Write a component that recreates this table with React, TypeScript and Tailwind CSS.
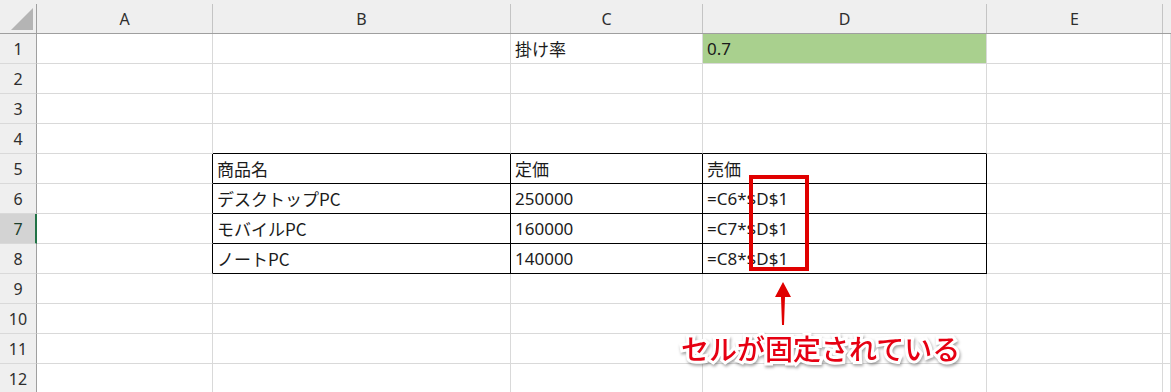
import React from "react";

type Col = { label: string; w: number | null };

const COLS: Col[] = [
  { label: "A", w: 176 },
  { label: "B", w: 298 },
  { label: "C", w: 192 },
  { label: "D", w: 284 },
  { label: "E", w: 176 },
  { label: "", w: null },
];

// cell contents keyed by "row:colIndex"
const DATA: Record<string, string> = {
  "1:2": "掛け率",
  "1:3": "0.7",
  "5:1": "商品名",
  "5:2": "定価",
  "5:3": "売価",
  "6:1": "デスクトップPC",
  "6:2": "250000",
  "6:3": "=C6*$D$1",
  "7:1": "モバイルPC",
  "7:2": "160000",
  "7:3": "=C7*$D$1",
  "8:1": "ノートPC",
  "8:2": "140000",
  "8:3": "=C8*$D$1",
};

const ROWS = [1, 2, 3, 4, 5, 6, 7, 8, 9, 10, 11, 12];
const SELECTED_ROW = 7;

const LATIN = "'Noto Sans', 'Noto Sans CJK JP', sans-serif";
const JAPANESE = "'Noto Sans CJK JP', 'Noto Sans', sans-serif";

const inTable = (r: number, c: number) => r >= 5 && r <= 8 && c >= 1 && c <= 3;
const isJapanese = (s: string) => /[^\x00-\x7f]/.test(s);

function Cell({ r, c, col }: { r: number; c: number; col: Col }) {
  const text = DATA[`${r}:${c}`];
  const rightBlack = inTable(r, c) || (r >= 5 && r <= 8 && c === 0);
  const bottomBlack = inTable(r, c) || (r === 4 && c >= 1 && c <= 3);
  const green = r === 1 && c === 3;
  const style: React.CSSProperties = {};
  if (col.w !== null) style.width = col.w;
  if (text && isJapanese(text)) style.fontFamily = JAPANESE;
  return (
    <div
      className={`h-[30px] shrink-0 border-b border-r flex items-center pl-[4px] pt-[1px] text-[17px] text-[#1b1b1b] whitespace-nowrap overflow-hidden ${
        rightBlack ? "border-r-black" : "border-r-[#d9d9d9]"
      } ${bottomBlack ? "border-b-black" : "border-b-[#d9d9d9]"} ${
        green ? "bg-[#a9d08e]" : "bg-white"
      } ${col.w === null ? "flex-1" : ""}`}
      style={style}
    >
      {text}
    </div>
  );
}

export default function App() {
  return (
    <div
      className="relative w-[1171px] h-[392px] overflow-hidden bg-white select-none"
      style={{ fontFamily: LATIN }}
    >
      {/* column headers */}
      <div className="flex h-[34px] bg-[#efefef] border-b border-b-[#9f9f9f]">
        <div className="relative w-[37px] shrink-0 border-r border-r-[#9f9f9f] mt-[4px]">
          <svg className="absolute left-[11px] top-[4px]" width="22" height="22" viewBox="0 0 22 22">
            <polygon points="22,0 22,22 0,22" fill="#b4b4b4" />
          </svg>
        </div>
        {COLS.map((col, i) => (
          <div
            key={i}
            className={`mt-[4px] h-[29px] shrink-0 flex items-center justify-center text-[16px] text-[#2e2e2e] ${
              i < COLS.length - 1 ? "border-r border-r-[#c4c4c4]" : "flex-1"
            }`}
            style={col.w !== null ? { width: col.w } : undefined}
          >
            {col.label}
          </div>
        ))}
      </div>

      {/* rows */}
      {ROWS.map((r) => (
        <div key={r} className="flex">
          <div
            className={`w-[37px] h-[30px] shrink-0 border-b border-b-[#d9d9d9] flex items-center justify-center text-[16px] ${
              r === SELECTED_ROW
                ? "bg-[#d3d3d3] text-[#1d3f2c] border-r-[2px] border-r-[#217346] pl-[1px]"
                : "bg-[#efefef] text-[#2e2e2e] border-r border-r-[#9f9f9f]"
            }`}
          >
            {r}
          </div>
          {COLS.map((col, c) => (
            <Cell key={c} r={r} c={c} col={col} />
          ))}
        </div>
      ))}

      {/* annotation: highlight box around the absolute references */}
      <div className="absolute left-[749px] top-[175px] w-[60px] h-[96px] border-[4px] border-[#e00000]" />

      {/* annotation: arrow pointing up to the box */}
      <svg className="absolute left-[774px] top-[282px]" width="18" height="45" viewBox="0 0 18 45">
        <polygon points="9,0 17,15 11,15 10,43 8,43 7,15 1,15" fill="#e00000" />
      </svg>

      {/* annotation: caption */}
      <div
        className="absolute left-[681px] top-[328px] text-[28px] font-medium leading-[40px] text-[#e60012] whitespace-nowrap [paint-order:stroke_fill] [-webkit-text-stroke:6px_white] [filter:drop-shadow(1px_2px_1.5px_rgba(0,0,0,0.35))]"
        style={{ fontFamily: JAPANESE }}
      >
        セルが固定されている
      </div>
    </div>
  );
}
